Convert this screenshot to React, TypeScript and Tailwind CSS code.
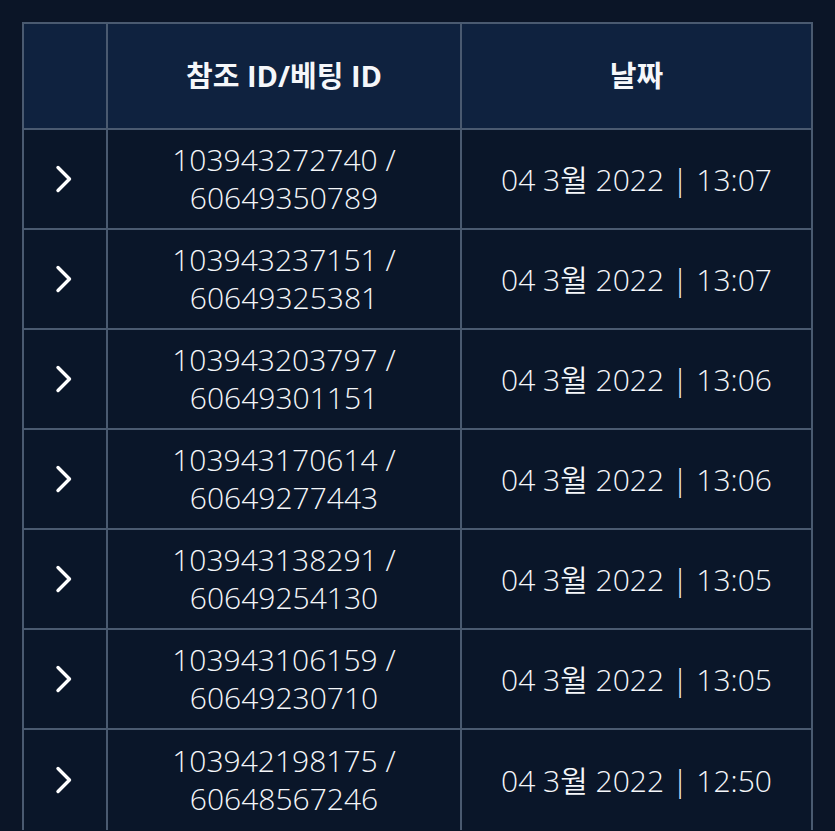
import { FC } from "react";

interface Row {
  ref: string;
  bet: string;
  date: string;
  time: string;
}

const rows: Row[] = [
  { ref: "103943272740", bet: "60649350789", date: "04 3월 2022", time: "13:07" },
  { ref: "103943237151", bet: "60649325381", date: "04 3월 2022", time: "13:07" },
  { ref: "103943203797", bet: "60649301151", date: "04 3월 2022", time: "13:06" },
  { ref: "103943170614", bet: "60649277443", date: "04 3월 2022", time: "13:06" },
  { ref: "103943138291", bet: "60649254130", date: "04 3월 2022", time: "13:05" },
  { ref: "103943106159", bet: "60649230710", date: "04 3월 2022", time: "13:05" },
  { ref: "103942198175", bet: "60648567246", date: "04 3월 2022", time: "12:50" },
];

const Chevron: FC = () => (
  <svg width="24" height="30" viewBox="0 0 24 30" fill="none">
    <path d="M6 3.5 L17.5 15 L6 26.5" stroke="#ffffff" strokeWidth="3.4" strokeLinecap="round" strokeLinejoin="round" />
  </svg>
);

const App: FC = () => {
  return (
    <div
      className="w-[835px] h-[831px] overflow-hidden bg-[#0b1527] pt-[22px] pl-[22px]"
      style={{ fontFamily: '"Open Sans", "Noto Sans CJK KR", sans-serif' }}
    >
      <div className="w-[791px] border-t-2 border-x-2 border-[#4a5a70] grid grid-cols-[84px_354px_1fr] text-[#f5f7fa]">
        <div className="h-[106px] bg-[#0f223f] border-r-2 border-b-2 border-[#4a5a70]" />
        <div className="h-[106px] bg-[#0f223f] border-r-2 border-b-2 border-[#4a5a70] flex items-center justify-center text-[29px] font-bold">
          참조 ID/베팅 ID
        </div>
        <div className="h-[106px] bg-[#0f223f] border-b-2 border-[#4a5a70] flex items-center justify-center text-[29px] font-bold">
          날짜
        </div>
        {rows.map((r, i) => {
          const last = i === rows.length - 1;
          const bb = last ? "" : "border-b-2";
          return (
            <div key={r.ref} className="contents">
              <div className={`h-[100px] bg-[#0a1629] border-r-2 ${bb} border-[#4a5a70] flex items-center justify-center pr-[2px]`}>
                <Chevron />
              </div>
              <div className={`h-[100px] bg-[#0a1629] border-r-2 ${bb} border-[#4a5a70] flex flex-col items-center justify-center text-[30px] font-[350] leading-[38px] text-center`}>
                <span>{r.ref} /</span>
                <span>{r.bet}</span>
              </div>
              <div className={`h-[100px] bg-[#0a1629] ${bb} border-[#4a5a70] flex items-center justify-center text-[30px] font-[350]`}>
                <span>{r.date}</span>
                <span className="mx-[8px]">|</span>
                <span>{r.time}</span>
              </div>
            </div>
          );
        })}
      </div>
    </div>
  );
};

export default App;
